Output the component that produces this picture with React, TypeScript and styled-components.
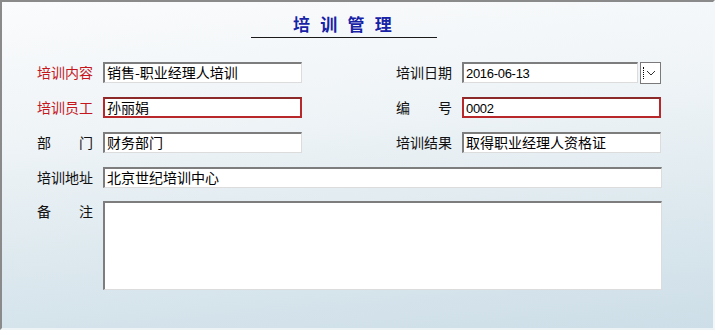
import React from "react";
import styled, { createGlobalStyle, css } from "styled-components";

const Global = createGlobalStyle`
  html, body { margin: 0; padding: 0; }
  body { width: 715px; height: 330px; overflow: hidden; background: #fff; }
  * { box-sizing: border-box; }
`;

const Frame = styled.div`
  width: 715px;
  height: 330px;
  border-top: 2px solid #8a8a8a;
  border-left: 2px solid #8a8a8a;
  border-right: 2px solid #f4f7f9;
  border-bottom: 2px solid #eef3f6;
  background: linear-gradient(175deg, #fafbfc 0%, #eff4f7 35%, #dce8ee 70%, #cddee8 100%);
  font-family: "Noto Sans CJK SC", "Liberation Sans", sans-serif;
  font-size: 14px;
  color: #111;
  display: flex;
  flex-direction: column;
`;

const TitleBar = styled.div`
  margin: 9px 0 0 249px;
  width: 186px;
  height: 27px;
  border-bottom: 1px solid #1a1a1a;
  display: flex;
  justify-content: center;
  align-items: center;
`;

const Title = styled.h1`
  margin: 0 0 0 0;
  font-size: 17px;
  font-weight: bold;
  color: #1722a6;
  letter-spacing: 3.2px;
  white-space: pre;
  line-height: 20px;
`;

const Form = styled.div`
  margin: 23px 0 0 35px;
  display: flex;
  flex-direction: column;
  gap: 13px;
`;

const Row = styled.div`
  display: flex;
  gap: 94px;
  height: 22px;
`;

const Field = styled.div<{ $wide?: boolean }>`
  display: grid;
  grid-template-columns: 56px ${(p) => (p.$wide ? "559px" : "199px")};
  column-gap: 10px;
  align-items: center;
`;

const Label = styled.label<{ $red?: boolean; $spread?: boolean }>`
  color: ${(p) => (p.$red ? "#c4161c" : "#111")};
  font-size: 14px;
  line-height: 16px;
  white-space: nowrap;
  ${(p) =>
    p.$spread &&
    css`
      display: flex;
      justify-content: space-between;
    `}
`;

const sunken = css`
  border-top: 2px solid #7d7d7d;
  border-left: 2px solid #7d7d7d;
  border-right: 1px solid #dcdcdc;
  border-bottom: 1px solid #dcdcdc;
`;

const Input = styled.div<{ $red?: boolean }>`
  height: 21px;
  background: #fff;
  ${(p) =>
    p.$red
      ? css`
          border: 2px solid #b8282a;
          border-top-color: #8c2a2a;
        `
      : sunken}
  padding: 0 2px;
  font-size: 14px;
  line-height: 17px;
  color: #000;
  white-space: nowrap;
  overflow: hidden;
`;

const Digits = styled.span`
  font-family: "Liberation Sans", "Noto Sans CJK SC", sans-serif;
  font-size: 13px;
  letter-spacing: -0.3px;
`;

const DateBox = styled.div`
  display: flex;
  gap: 2px;
  height: 21px;
`;

const DateInput = styled(Input)`
  flex: 1;
`;

const DropButton = styled.div`
  width: 21px;
  height: 22px;
  border: 1px solid #7a7a7a;
  background: #fff;
  display: flex;
  align-items: center;
  justify-content: center;
  position: relative;
`;

const Dots = styled.span`
  position: absolute;
  left: 2px;
  top: 4px;
  width: 2px;
  height: 12px;
  border-left: 1px dotted #000;
`;

const Memo = styled(Input)`
  height: 89px;
`;

const MemoRow = styled(Field)`
  align-items: start;
`;

const MemoLabel = styled(Label)`
  margin-top: 2px;
`;

export default function App() {
  return (
    <>
      <Global />
      <Frame>
        <TitleBar>
          <Title>培 训 管 理</Title>
        </TitleBar>
        <Form>
          <Row>
            <Field>
              <Label $red>培训内容</Label>
              <Input>销售-职业经理人培训</Input>
            </Field>
            <Field>
              <Label>培训日期</Label>
              <DateBox>
                <DateInput>
                  <Digits>2016-06-13</Digits>
                </DateInput>
                <DropButton>
                  <Dots />
                  <svg width="10" height="6" viewBox="0 0 10 6">
                    <path d="M1 1 L5 5 L9 1" fill="none" stroke="#333" strokeWidth="1" />
                  </svg>
                </DropButton>
              </DateBox>
            </Field>
          </Row>
          <Row>
            <Field>
              <Label $red>培训员工</Label>
              <Input $red>孙丽娟</Input>
            </Field>
            <Field>
              <Label $spread>
                <span>编</span>
                <span>号</span>
              </Label>
              <Input $red>
                <Digits>0002</Digits>
              </Input>
            </Field>
          </Row>
          <Row>
            <Field>
              <Label $spread>
                <span>部</span>
                <span>门</span>
              </Label>
              <Input>财务部门</Input>
            </Field>
            <Field>
              <Label>培训结果</Label>
              <Input>取得职业经理人资格证</Input>
            </Field>
          </Row>
          <Row>
            <Field $wide>
              <Label>培训地址</Label>
              <Input>北京世纪培训中心</Input>
            </Field>
          </Row>
          <MemoRow $wide>
            <MemoLabel $spread>
              <span>备</span>
              <span>注</span>
            </MemoLabel>
            <Memo />
          </MemoRow>
        </Form>
      </Frame>
    </>
  );
}
